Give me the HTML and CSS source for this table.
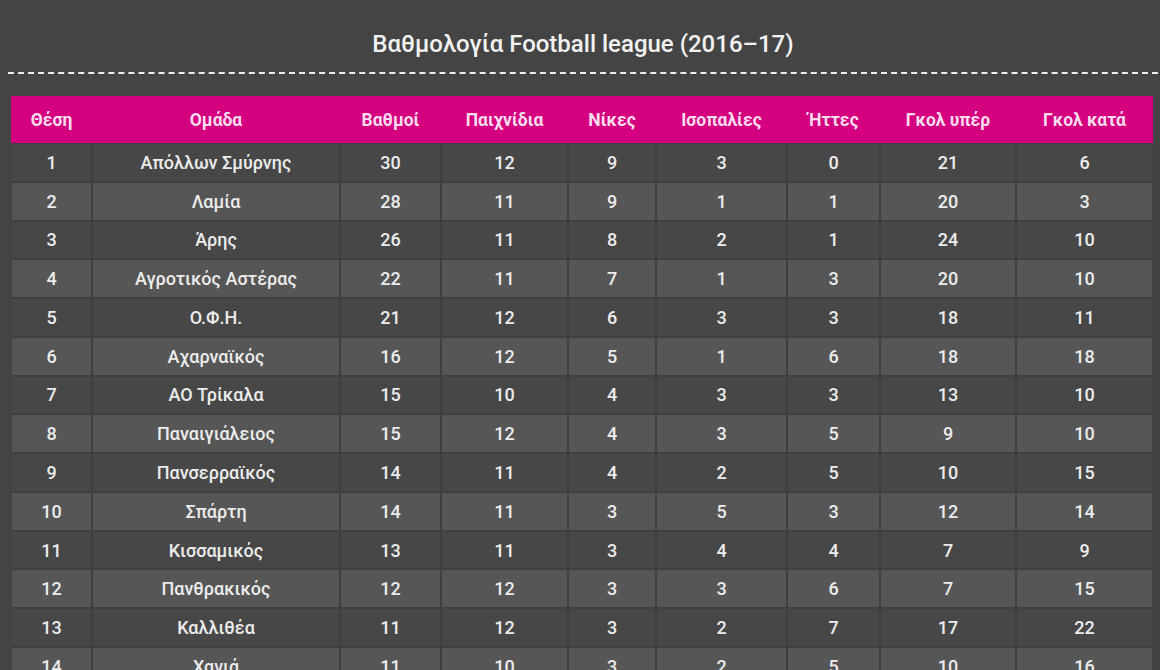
FILE: index.html
```html
<!DOCTYPE html>
<html lang="el">
<head>
<meta charset="utf-8">
<title>Βαθμολογία Football league (2016–17)</title>
<link rel="stylesheet" href="styles.css">
</head>
<body>
<div class="page">
  <h1 class="title">Βαθμολογία Football league (2016–17)</h1>
  <table class="standings">
    <colgroup>
      <col class="c-pos"><col class="c-team"><col class="c-pts"><col class="c-gp"><col class="c-w"><col class="c-d"><col class="c-l"><col class="c-gf"><col class="c-ga">
    </colgroup>
    <thead>
      <tr><th>Θέση</th><th>Ομάδα</th><th>Βαθμοί</th><th>Παιχνίδια</th><th>Νίκες</th><th>Ισοπαλίες</th><th>Ήττες</th><th>Γκολ υπέρ</th><th>Γκολ κατά</th></tr>
    </thead>
    <tbody>
      <tr><td>1</td><td>Απόλλων Σμύρνης</td><td>30</td><td>12</td><td>9</td><td>3</td><td>0</td><td>21</td><td>6</td></tr>
      <tr><td>2</td><td>Λαμία</td><td>28</td><td>11</td><td>9</td><td>1</td><td>1</td><td>20</td><td>3</td></tr>
      <tr><td>3</td><td>Άρης</td><td>26</td><td>11</td><td>8</td><td>2</td><td>1</td><td>24</td><td>10</td></tr>
      <tr><td>4</td><td>Αγροτικός Αστέρας</td><td>22</td><td>11</td><td>7</td><td>1</td><td>3</td><td>20</td><td>10</td></tr>
      <tr><td>5</td><td>Ο.Φ.Η.</td><td>21</td><td>12</td><td>6</td><td>3</td><td>3</td><td>18</td><td>11</td></tr>
      <tr><td>6</td><td>Αχαρναϊκός</td><td>16</td><td>12</td><td>5</td><td>1</td><td>6</td><td>18</td><td>18</td></tr>
      <tr><td>7</td><td>ΑΟ Τρίκαλα</td><td>15</td><td>10</td><td>4</td><td>3</td><td>3</td><td>13</td><td>10</td></tr>
      <tr><td>8</td><td>Παναιγιάλειος</td><td>15</td><td>12</td><td>4</td><td>3</td><td>5</td><td>9</td><td>10</td></tr>
      <tr><td>9</td><td>Πανσερραϊκός</td><td>14</td><td>11</td><td>4</td><td>2</td><td>5</td><td>10</td><td>15</td></tr>
      <tr><td>10</td><td>Σπάρτη</td><td>14</td><td>11</td><td>3</td><td>5</td><td>3</td><td>12</td><td>14</td></tr>
      <tr><td>11</td><td>Κισσαμικός</td><td>13</td><td>11</td><td>3</td><td>4</td><td>4</td><td>7</td><td>9</td></tr>
      <tr><td>12</td><td>Πανθρακικός</td><td>12</td><td>12</td><td>3</td><td>3</td><td>6</td><td>7</td><td>15</td></tr>
      <tr><td>13</td><td>Καλλιθέα</td><td>11</td><td>12</td><td>3</td><td>2</td><td>7</td><td>17</td><td>22</td></tr>
      <tr><td>14</td><td>Χανιά</td><td>11</td><td>10</td><td>3</td><td>2</td><td>5</td><td>10</td><td>16</td></tr>
    </tbody>
  </table>
</div>
</body>
</html>
```

FILE: styles.css
```css
html, body {
  margin: 0;
  padding: 0;
  background: #444444;
}

body {
  font-family: Roboto, "Noto Sans", "DejaVu Sans", sans-serif;
  color: #ececec;
}

.page {
  padding: 0 2px 0 8px;
}

.title {
  margin: 0;
  padding: 31px 0 15px;
  font-size: 24px;
  line-height: 26px;
  font-weight: 500;
  text-align: center;
  color: #f2f2f2;
  border-bottom: 2px dashed #eeeeee;
}

.standings {
  margin: 22px 5px 0 3px;
  width: 1142px;
  table-layout: fixed;
  border-collapse: separate;
  border-spacing: 0;
}

.c-pos { width: 81px; }
.c-team { width: 248px; }
.c-pts { width: 101px; }
.c-gp { width: 127px; }
.c-w { width: 88px; }
.c-d { width: 131px; }
.c-l { width: 93px; }
.c-gf { width: 136px; }
.c-ga { width: 137px; }

.standings th {
  height: 47px;
  padding: 0;
  background: #d4007f;
  color: #f8dcee;
  font-size: 17.5px;
  font-weight: 700;
  text-align: center;
  vertical-align: middle;
}

.standings td {
  height: 36.77px;
  padding: 0;
  border: 1px solid #3f3f3f;
  font-size: 18px;
  font-weight: 500;
  text-align: center;
  vertical-align: middle;
  color: #ececec;
}

.standings tbody tr:nth-child(odd) td {
  background: #474747;
}

.standings tbody tr:nth-child(even) td {
  background: #565656;
}
```
